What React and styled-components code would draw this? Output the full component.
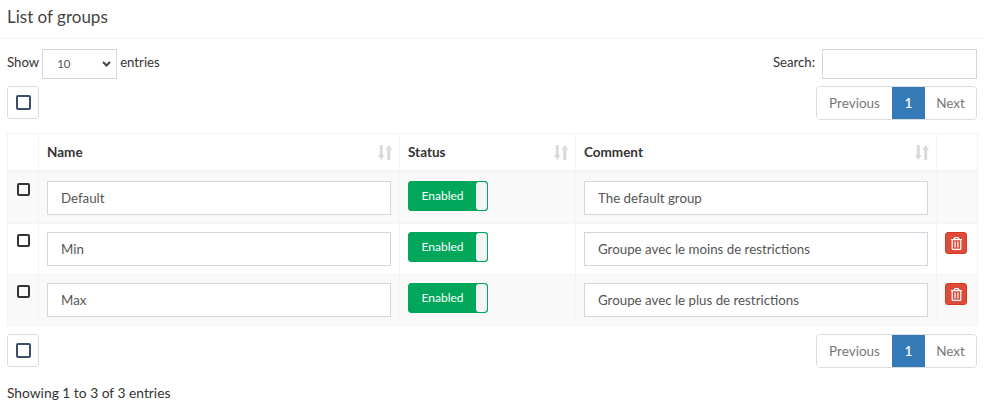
import React from "react";
import styled, { createGlobalStyle } from "styled-components";
import { FaRegTrashAlt } from "react-icons/fa";

const GlobalStyle = createGlobalStyle`
  html, body {
    margin: 0;
    background: #fff;
    color: #333;
    font-family: "Lato", "Open Sans", sans-serif;
    font-size: 14px;
  }
`;

const Page = styled.div`
  width: 984px;
  height: 405px;
  overflow: hidden;
`;

const Header = styled.div`
  height: 38px;
  padding: 0 7px;
  display: flex;
  align-items: flex-start;
  border-bottom: 1px solid #f4f4f4;
`;

const Title = styled.h3`
  margin: 0;
  font-size: 17px;
  line-height: 33px;
  font-weight: 400;
  color: #444;
`;

const Body = styled.div`
  padding: 10px 7px 0;
`;

const Row = styled.div`
  display: flex;
  justify-content: space-between;
  align-items: flex-start;
  margin-bottom: ${(p) => p.$gap || 0}px;
`;

const Label = styled.label`
  display: flex;
  align-items: flex-start;
  gap: 3px;
  height: 30px;
  line-height: 26px;
  font-size: 13.200px;
`;

const LengthBox = styled.div`
  width: 75px;
  height: 30px;
  box-sizing: border-box;
  border: 1px solid #d2d6de;
  padding: 0 5px 0 14px;
  display: flex;
  align-items: center;
  justify-content: space-between;
  font-size: 11.500px;
  color: #555;
`;

const SearchInput = styled.input`
  width: 155px;
  height: 30px;
  box-sizing: border-box;
  border: 1px solid #d2d6de;
  margin-left: 4px;
  outline: none;
`;

const SquareButton = styled.button`
  width: 32px;
  height: 33px;
  padding: 0;
  box-sizing: border-box;
  background: #fff;
  border: 1px solid #ddd;
  border-radius: 3px;
  display: flex;
  align-items: center;
  justify-content: center;
`;

const Box = styled.span`
  display: block;
  width: ${(p) => p.$size}px;
  height: ${(p) => p.$size}px;
  box-sizing: border-box;
  border: 2px solid ${(p) => p.$color};
  border-radius: 2px;
`;

const Pager = styled.div`
  display: flex;
  height: 34px;
  box-sizing: border-box;
  border: 1px solid #ddd;
  border-radius: 4px;
  overflow: hidden;
  font-size: 13.500px;
`;

const PageLink = styled.span`
  display: flex;
  align-items: center;
  justify-content: center;
  width: ${(p) => p.$w}px;
  color: ${(p) => (p.$active ? "#fff" : "#777")};
  background: ${(p) => (p.$active ? "#337ab7" : "#fff")};
  font-weight: ${(p) => (p.$active ? 600 : 400)};
`;

const Table = styled.table`
  width: 970px;
  border-collapse: collapse;
  table-layout: fixed;
  margin: 13px 0 8px;
`;

const Th = styled.th`
  position: relative;
  height: 36px;
  padding: 0 8px;
  text-align: left;
  font-size: 13.500px;
  font-weight: 700;
  color: #333;
  border: 1px solid #f4f4f4;
  border-bottom-width: 3px;
`;

const SortIcon = styled.svg`
  position: absolute;
  right: 7px;
  top: 11px;
`;

const Tr = styled.tr`
  background: ${(p) => (p.$odd ? "#f9f9f9" : "#fff")};
`;

const Td = styled.td`
  height: 51px;
  box-sizing: border-box;
  padding: 8px;
  vertical-align: top;
  border: 1px solid #f4f4f4;
`;

const CheckCell = styled(Td)`
  padding: 10px 0 0 9px;
`;

const TextInput = styled.input`
  display: block;
  width: 100%;
  height: 34px;
  box-sizing: border-box;
  padding: 6px 13px;
  border: 1px solid #d2d6de;
  background: #fff;
  font: inherit;
  font-size: 13.300px;
  color: #555;
  outline: none;
`;

const Toggle = styled.div`
  display: flex;
  width: 80px;
  height: 30px;
  box-sizing: border-box;
  border: 1px solid #00a65a;
  border-radius: 3px;
  overflow: hidden;
  background: #00a65a;
`;

const ToggleOn = styled.span`
  flex: 1;
  display: flex;
  align-items: center;
  justify-content: center;
  padding-bottom: 2px;
  color: #fff;
  font-size: 12px;
`;

const ToggleHandle = styled.span`
  width: 11px;
  background: #f4f4f4;
  border-radius: 3px;
`;

const DeleteButton = styled.button`
  width: 22px;
  height: 22px;
  padding: 0;
  background: #dd4b39;
  border: 1px solid #d73925;
  border-radius: 3px;
  color: #fff;
  display: flex;
  align-items: center;
  justify-content: center;
  font-size: 13px;
`;

const Info = styled.div`
  margin-top: 16px;
  font-size: 13.800px;
  color: #333;
`;

const Caret = () => (
  <svg width="9" height="6" viewBox="0 0 9 6">
    <path d="M1 1l3.500 3.500L8 1" fill="none" stroke="#444" strokeWidth="2" />
  </svg>
);

const Sort = () => (
  <SortIcon width="14" height="15" viewBox="0 0 14 15" fill="#d9d9d9">
    <path d="M1.750 0h3v10h1.750L3.250 15 0 10h1.750z" />
    <path d="M10.750 0 14 5h-1.750v10h-3V5H7.500z" />
  </SortIcon>
);

const Pagination = () => (
  <Pager>
    <PageLink $w={75}>Previous</PageLink>
    <PageLink $w={33} $active>1</PageLink>
    <PageLink $w={51}>Next</PageLink>
  </Pager>
);

const groups = [
  { name: "Default", comment: "The default group" },
  { name: "Min", comment: "Groupe avec le moins de restrictions", removable: true },
  { name: "Max", comment: "Groupe avec le plus de restrictions", removable: true },
];

export default function App() {
  return (
    <Page>
      <GlobalStyle />
      <Header>
        <Title>List of groups</Title>
      </Header>
      <Body>
        <Row $gap={7}>
          <Label>
            Show
            <LengthBox>
              10
              <Caret />
            </LengthBox>
            entries
          </Label>
          <Label>
            Search:
            <SearchInput />
          </Label>
        </Row>
        <Row>
          <SquareButton>
            <Box $size={15} $color="#3c4f66" />
          </SquareButton>
          <Pagination />
        </Row>
        <Table>
          <colgroup>
            <col width="31" />
            <col width="361" />
            <col width="176" />
            <col width="361" />
            <col width="41" />
          </colgroup>
          <thead>
            <tr>
              <Th />
              <Th>Name<Sort /></Th>
              <Th>Status<Sort /></Th>
              <Th>Comment<Sort /></Th>
              <Th />
            </tr>
          </thead>
          <tbody>
            {groups.map((g, i) => (
              <Tr key={g.name} $odd={i % 2 === 0}>
                <CheckCell>
                  <Box $size={13} $color="#333" />
                </CheckCell>
                <Td><TextInput defaultValue={g.name} /></Td>
                <Td>
                  <Toggle>
                    <ToggleOn>Enabled</ToggleOn>
                    <ToggleHandle />
                  </Toggle>
                </Td>
                <Td><TextInput defaultValue={g.comment} /></Td>
                <Td>
                  {g.removable && (
                    <DeleteButton>
                      <FaRegTrashAlt />
                    </DeleteButton>
                  )}
                </Td>
              </Tr>
            ))}
          </tbody>
        </Table>
        <Row>
          <SquareButton>
            <Box $size={15} $color="#3c4f66" />
          </SquareButton>
          <Pagination />
        </Row>
        <Info>Showing 1 to 3 of 3 entries</Info>
      </Body>
    </Page>
  );
}
